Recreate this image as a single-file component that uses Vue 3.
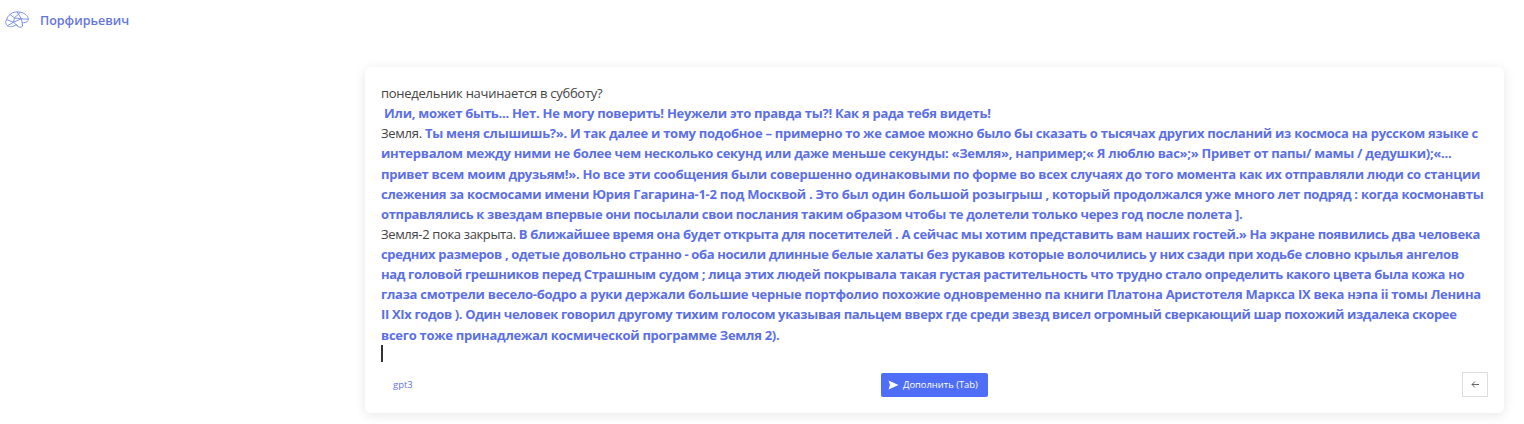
<template>
  <div class="page">
    <header class="top">
      <svg class="logo" width="26" height="21" viewBox="0 0 30 24" fill="none" stroke="#6f82e8" stroke-width="1" stroke-linejoin="round">
        <path d="M7 5 C10 2 15 1.500 19 2.500 C24 3.500 28 6.500 28 10.500 C28 13 26 14.500 23 14.500 L21 15 L21.500 18.500 C20 20.500 17 20 16 18.500 L14 17 C11 19 7 20 4 18 C1.500 16 1.500 13 3 11 C4 8.500 5 6.500 7 5 Z" />
        <path d="M7 5 L12 9 L19 2.500 M12 9 L11 14 L4 18 M12 9 L20 10 L28 10.500 M20 10 L21 15 M11 14 L16 18.500 M3 11 L11 14 M11 14 L20 10 M15 2 L20 10" />
      </svg>
      <span class="brand">Порфирьевич</span>
    </header>

    <main class="wrap">
      <section class="card">
        <div class="editor">
          <p v-for="(l, i) in lines" :key="i" class="line" :class="{ tight: l.tight }">{{ l.plain }}<b v-if="l.bold">{{ l.bold }}</b></p>
          <span class="caret"></span>
        </div>

        <div class="bar">
          <span class="model">gpt3</span>
          <button class="go" type="button">
            <svg width="11" height="10" viewBox="0 0 11 10"><path d="M0.500 0.500 L10.500 5 L0.500 9.500 L2 5 Z" fill="#fff" /></svg>
            Дополнить (Tab)
          </button>
          <button class="back" type="button">
            <svg width="9" height="9" viewBox="0 0 9 9" fill="none" stroke="#666" stroke-width="1"><path d="M8 4.500 H1 M4 1.500 L1 4.500 L4 7.500" /></svg>
          </button>
        </div>
      </section>
    </main>
  </div>
</template>

<script setup>
const lines = [
  { plain: 'понедельник начинается в субботу?' },
  { bold: '\u00a0Или, может быть... Нет. Не могу поверить! Неужели это правда ты?! Как я рада тебя видеть!' },
  { plain: 'Земля. ', bold: 'Ты меня слышишь?». И так далее и тому подобное – примерно то же самое можно было бы сказать о тысячах других посланий из космоса на русском языке с' },
  { bold: 'интервалом между ними не более чем несколько секунд или даже меньше секунды: «Земля», например;« Я люблю вас»;» Привет от папы/ мамы / дедушки);«...' },
  { bold: 'привет всем моим друзьям!». Но все эти сообщения были совершенно одинаковыми по форме во всех случаях до того момента как их отправляли люди со станции' },
  { bold: 'слежения за космосами имени Юрия Гагарина-1-2 под Москвой . Это был один большой розыгрыш , который продолжался уже много лет подряд : когда космонавты' },
  { tight: true, bold: 'отправлялись к звездам впервые они посылали свои послания таким образом чтобы те долетели только через год после полета ].' },
  { tight: true, plain: 'Земля-2 пока закрыта. ', bold: 'В ближайшее время она будет открыта для посетителей . А сейчас мы хотим представить вам наших гостей.» На экране появились два человека' },
  { tight: true, bold: 'средних размеров , одетые довольно странно - оба носили длинные белые халаты без рукавов которые волочились у них сзади при ходьбе словно крылья ангелов' },
  { tight: true, bold: 'над головой грешников перед Страшным судом ; лица этих людей покрывала такая густая растительность что трудно стало определить какого цвета была кожа но' },
  { bold: 'глаза смотрели весело-бодро а руки держали большие черные портфолио похожие одновременно па книги Платона Аристотеля Маркса IX века нэпа ii томы Ленина' },
  { tight: true, bold: 'II XIx годов ). Один человек говорил другому тихим голосом указывая пальцем вверх где среди звезд висел огромный сверкающий шар похожий издалека скорее' },
  { bold: 'всего тоже принадлежал космической программе Земля 2).' }
]
</script>

<style>
body {
  background: #fff;
}
</style>

<style scoped>
.page {
  height: 424px;
  overflow: hidden;
  font-family: "Open Sans", "Noto Sans", sans-serif;
  background: #fff;
}
.top {
  display: flex;
  align-items: center;
  height: 40px;
  padding-left: 4px;
  gap: 10px;
}
.brand {
  color: #6475e0;
  font-size: 12.500px;
  font-weight: 600;
}
.wrap {
  padding: 27px 20px 0 365px;
}
.card {
  background: #fff;
  border-radius: 6px;
  box-shadow: 0 2px 12px rgba(0, 0, 0, 0.1);
  padding: 16px 16px 17px;
  height: 346px;
  box-sizing: border-box;
  display: flex;
  flex-direction: column;
}
.editor {
  font-size: 13px;
  letter-spacing: -0.270px;
  line-height: 20.120px;
  color: #444;
  flex: 1;
}
.line {
  margin: 0;
  white-space: nowrap;
}
.line.tight {
  letter-spacing: -0.350px;
}
.line b {
  color: #5b6fe6;
  font-weight: 700;
}
.caret {
  display: block;
  width: 2px;
  height: 17px;
  background: #333;
}
.bar {
  display: grid;
  grid-template-columns: 1fr auto 1fr;
  align-items: center;
  height: 24px;
}
.model {
  font-size: 9.500px;
  color: #6475e0;
  padding-left: 12px;
}
.go {
  display: flex;
  align-items: center;
  gap: 4px;
  height: 24px;
  width: 107px;
  padding: 0 0 0 7px;
  border: none;
  border-radius: 2px;
  background: #4f6ef7;
  color: #fff;
  font-family: inherit;
  font-size: 9.400px;
}
.back {
  display: flex;
  align-items: center;
  justify-content: center;
  justify-self: end;
  width: 26px;
  height: 25px;
  padding: 0;
  background: #fff;
  border: 1px solid #ddd;
}
</style>
